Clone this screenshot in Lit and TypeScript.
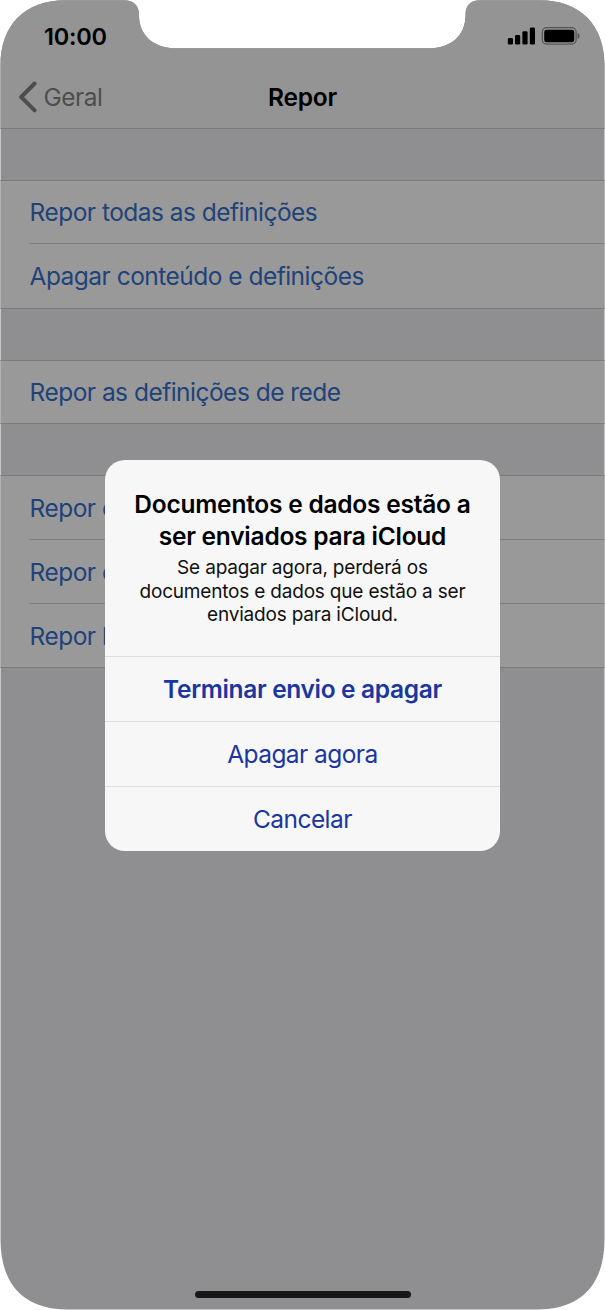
import { LitElement, html, css } from "lit";
import { customElement, property } from "lit/decorators.js";

@customElement("status-bar")
class StatusBar extends LitElement {
  static styles = css`
    :host { display: flex; justify-content: space-between; height: 64px; box-sizing: border-box; padding: 23px 24px 0 44px; color: #000; }
    .time { font-size: 23.5px; line-height: 28px; font-weight: 600; letter-spacing: -0.25px; }
    .icons { display: block; margin-top: 3px; }
  `;
  render() {
    return html`
      <span class="time">10:00</span>
      <svg class="icons" width="74" height="20" viewBox="507 26 74 20">
        <rect x="507.800" y="38" width="5.200" height="6.600" rx="1.400"/>
        <rect x="515" y="35" width="5.200" height="9.600" rx="1.400"/>
        <rect x="522.400" y="31.200" width="5.200" height="13.400" rx="1.400"/>
        <rect x="529.800" y="27.600" width="5.200" height="17" rx="1.400"/>
        <rect x="542.300" y="27.600" width="33.800" height="16.600" rx="4.400" fill="none" stroke="#555" stroke-width="1.300"/>
        <rect x="544.200" y="29.700" width="30" height="12.600" rx="2.400"/>
        <path d="M577.600 33c1.400.6 2 1.700 2 3s-.6 2.400-2 3z" fill="#555"/>
      </svg>
    `;
  }
}

@customElement("nav-bar")
class NavBar extends LitElement {
  static styles = css`
    :host { display: grid; grid-template-columns: 1fr auto 1fr; align-items: center; height: 65px; box-sizing: border-box; border-bottom: 1px solid #7a7a7b; padding: 2px 19px 0; }
    .back { display: flex; align-items: center; gap: 6.5px; color: #4e4e4e; font-size: 24.5px; letter-spacing: -0.5px; }
    .title { font-size: 24.5px; font-weight: 600; letter-spacing: -0.25px; color: #000; }
    .chevron { display: block; margin-top: -1px; }
  `;
  render() {
    return html`
      <span class="back">
        <svg class="chevron" width="18" height="32" viewBox="0 0 18 32"><path d="M15.600 2.500 2.200 16l13.400 13.300" fill="none" stroke="#4e4e4e" stroke-width="4" stroke-linecap="round" stroke-linejoin="round"/></svg>
        <span>Geral</span>
      </span>
      <span class="title">Repor</span>
    `;
  }
}

interface Row {
  label: string;
  size?: "tight" | "roomy";
}

@customElement("settings-group")
class SettingsGroup extends LitElement {
  @property({ attribute: false }) items: Row[] = [];
  static styles = css`
    :host { display: block; background: #999; border-top: 1px solid #7b7b7d; border-bottom: 1px solid #7b7b7d; padding-left: 29px; }
    .row { display: flex; align-items: center; height: 63px; box-sizing: content-box; font-size: 24.5px; letter-spacing: -0.52px; color: #1f4379; white-space: nowrap; }
    .tight { height: 62px; }
    .roomy { height: 64px; }
    .row + .row { border-top: 1px solid #7f7f80; }
    .label { padding-left: 0.5px; }
    .tight .label { padding-bottom: 1px; }
  `;
  render() {
    return this.items.map((r) => html`<div class="row ${r.size ?? ""}"><span class="label">${r.label}</span></div>`);
  }
}

@customElement("alert-dialog")
class AlertDialog extends LitElement {
  static styles = css`
    :host { display: block; width: 394.500px; height: 391px; border-radius: 20px; background: #f7f7f7; overflow: hidden; text-align: center; }
    .message { height: 196px; box-sizing: border-box; padding-top: 28px; }
    .title { margin: 0; font-size: 24.5px; line-height: 32px; font-weight: 600; letter-spacing: -0.23px; color: #000; }
    .body { margin: 4px 0 0; font-size: 19px; line-height: 23.500px; letter-spacing: -0.19px; color: #111; }
    .action { display: flex; align-items: center; justify-content: center; height: 65px; box-sizing: border-box; border-top: 1px solid #dedee0; font-size: 24.5px; letter-spacing: -0.56px; color: #1a36a0; }
    .strong { font-weight: 600; letter-spacing: -0.34px; }
  `;
  render() {
    return html`
      <div class="message">
        <h2 class="title">Documentos e dados estão a<br>ser enviados para iCloud</h2>
        <p class="body">Se apagar agora, perderá os<br>documentos e dados que estão a ser<br>enviados para iCloud.</p>
      </div>
      <div class="action strong">Terminar envio e apagar</div>
      <div class="action">Apagar agora</div>
      <div class="action">Cancelar</div>
    `;
  }
}

@customElement("app-root")
class AppRoot extends LitElement {
  static styles = css`
    :host { display: block; width: 605px; height: 1310px; background: #fff; font-family: Inter, "Liberation Sans", sans-serif; overflow: hidden; }
    .screen { position: relative; height: 1310px; background: #8f8f91; display: flex; flex-direction: column;
      clip-path: path("M.5 65C.5 25 25 .3 65 .3H124C134 .3 139 6 139 15C139 35 153 48.300 177 48.300H428C452 48.300 465.500 35 465.500 15C465.500 6 470 .3 480 .3H540C580 .3 604.500 25 604.500 65V1240C604.500 1283 582 1309.500 538 1309.500H67C23 1309.500 .5 1283 .5 1240Z"); }
    .top { background: #949494; }
    .groups { display: flex; flex-direction: column; gap: 51px; padding-top: 51px; flex: 1; }
    .home { align-self: center; width: 216px; height: 7px; border-radius: 4px; background: #181818; margin-bottom: 12px; }
    .dialog { position: absolute; left: 105.200px; top: 460px; }
  `;
  private groups: Row[][] = [
    [
      { label: "Repor todas as definições", size: "tight" },
      { label: "Apagar conteúdo e definições", size: "roomy" },
    ],
    [{ label: "Repor as definições de rede", size: "tight" }],
    [{ label: "Repor d" }, { label: "Repor d" }, { label: "Repor l" }],
  ];
  render() {
    return html`
      <div class="screen">
        <div class="top"><status-bar></status-bar><nav-bar></nav-bar></div>
        <div class="groups">
          ${this.groups.map((g) => html`<settings-group .items=${g}></settings-group>`)}
        </div>
        <div class="home"></div>
        <alert-dialog class="dialog"></alert-dialog>
      </div>
    `;
  }
}
